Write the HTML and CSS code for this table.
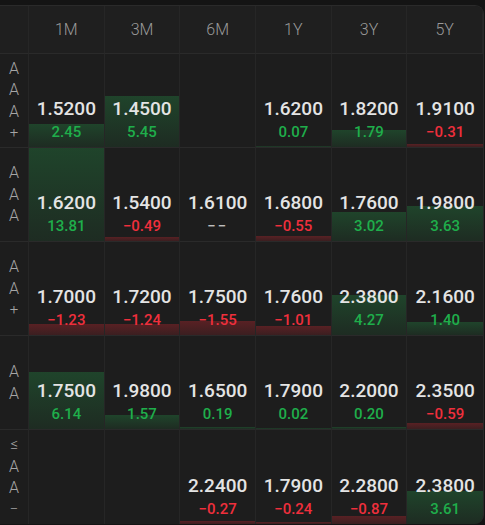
FILE: index.html
```html
<!DOCTYPE html>
<html lang="en">
<head>
    <meta charset="UTF-8">
    <meta name="viewport" content="width=device-width, initial-scale=1.0">
    <title>Rate Matrix</title>
    <link rel="stylesheet" href="styles.css">
</head>
<body>

    <div class="panel">
        <!-- Header -->
        <div class="cell head corner"></div>
        <div class="cell head">1M</div>
        <div class="cell head">3M</div>
        <div class="cell head">6M</div>
        <div class="cell head">1Y</div>
        <div class="cell head">3Y</div>
        <div class="cell head">5Y</div>

        <!-- Row 1 -->
        <div class="cell label"><span>A</span><span>A</span><span>A</span><span class="sign">+</span></div>
        <div class="cell"><div class="bar up" style="height:23px"></div><div class="val">1.5200</div><div class="chg up">2.45</div></div>
        <div class="cell"><div class="bar up" style="height:51px"></div><div class="val">1.4500</div><div class="chg up">5.45</div></div>
        <div class="cell"></div>
        <div class="cell"><div class="bar up" style="height:1px"></div><div class="val">1.6200</div><div class="chg up">0.07</div></div>
        <div class="cell"><div class="bar up" style="height:17px"></div><div class="val">1.8200</div><div class="chg up">1.79</div></div>
        <div class="cell last"><div class="bar down" style="height:3px"></div><div class="val">1.9100</div><div class="chg down">&minus;0.31</div></div>

        <!-- Row 2 -->
        <div class="cell label"><span>A</span><span>A</span><span>A</span></div>
        <div class="cell"><div class="bar up" style="height:100%"></div><div class="val">1.6200</div><div class="chg up">13.81</div></div>
        <div class="cell"><div class="bar down" style="height:4px"></div><div class="val">1.5400</div><div class="chg down">&minus;0.49</div></div>
        <div class="cell"><div class="val">1.6100</div><div class="chg flat">&minus;&minus;</div></div>
        <div class="cell"><div class="bar down" style="height:5px"></div><div class="val">1.6800</div><div class="chg down">&minus;0.55</div></div>
        <div class="cell"><div class="bar up" style="height:29px"></div><div class="val">1.7600</div><div class="chg up">3.02</div></div>
        <div class="cell last"><div class="bar up" style="height:35px"></div><div class="val">1.9800</div><div class="chg up">3.63</div></div>

        <!-- Row 3 -->
        <div class="cell label"><span>A</span><span>A</span><span class="sign">+</span></div>
        <div class="cell"><div class="bar down" style="height:11px"></div><div class="val">1.7000</div><div class="chg down">&minus;1.23</div></div>
        <div class="cell"><div class="bar down" style="height:11px"></div><div class="val">1.7200</div><div class="chg down">&minus;1.24</div></div>
        <div class="cell"><div class="bar down" style="height:14px"></div><div class="val">1.7500</div><div class="chg down">&minus;1.55</div></div>
        <div class="cell"><div class="bar down" style="height:9px"></div><div class="val">1.7600</div><div class="chg down">&minus;1.01</div></div>
        <div class="cell"><div class="bar up" style="height:40px"></div><div class="val">2.3800</div><div class="chg up">4.27</div></div>
        <div class="cell last"><div class="bar up" style="height:13px"></div><div class="val">2.1600</div><div class="chg up">1.40</div></div>

        <!-- Row 4 -->
        <div class="cell label"><span>A</span><span>A</span></div>
        <div class="cell"><div class="bar up" style="height:57px"></div><div class="val">1.7500</div><div class="chg up">6.14</div></div>
        <div class="cell"><div class="bar up" style="height:14px"></div><div class="val">1.9800</div><div class="chg up">1.57</div></div>
        <div class="cell"><div class="bar up" style="height:2px"></div><div class="val">1.6500</div><div class="chg up">0.19</div></div>
        <div class="cell"><div class="bar up" style="height:1px"></div><div class="val">1.7900</div><div class="chg up">0.02</div></div>
        <div class="cell"><div class="bar up" style="height:2px"></div><div class="val">2.2000</div><div class="chg up">0.20</div></div>
        <div class="cell last"><div class="bar down" style="height:6px"></div><div class="val">2.3500</div><div class="chg down">&minus;0.59</div></div>

        <!-- Row 5 -->
        <div class="cell label bottom"><span class="sign">&le;</span><span>A</span><span>A</span><span class="sign">&minus;</span></div>
        <div class="cell bottom"></div>
        <div class="cell bottom"></div>
        <div class="cell bottom"><div class="bar down" style="height:3px"></div><div class="val">2.2400</div><div class="chg down">&minus;0.27</div></div>
        <div class="cell bottom"><div class="bar down" style="height:2px"></div><div class="val">1.7900</div><div class="chg down">&minus;0.24</div></div>
        <div class="cell bottom"><div class="bar down" style="height:8px"></div><div class="val">2.2800</div><div class="chg down">&minus;0.87</div></div>
        <div class="cell bottom last"><div class="bar up" style="height:33px"></div><div class="val">2.3800</div><div class="chg up">3.61</div></div>
    </div>

</body>
</html>
```

FILE: styles.css
```css
/* General Styling */
body {
    margin: 0;
    background: #141414;
    font-family: Roboto, "Noto Sans", sans-serif;
    color: #e2e2e2;
}

/* Matrix Panel */
.panel {
    margin-top: 5px;
    width: 484px;
    height: 519px;
    display: grid;
    grid-template-columns: 29px repeat(6, 1fr);
    grid-template-rows: 48px repeat(5, 1fr);
    background: #1d1d1d;
    border-top: 1px solid #2a2a2a;
    border-right: 1px solid #2a2a2a;
    border-radius: 0 9px 9px 0;
    overflow: hidden;
    box-sizing: border-box;
}

/* Cells */
.cell {
    position: relative;
    display: flex;
    flex-direction: column;
    align-items: center;
    justify-content: flex-end;
    padding-bottom: 5px;
    border-right: 1px solid #262626;
    border-bottom: 1px solid #2a2a2a;
    box-sizing: border-box;
}
.cell.last {
    border-right: none;
}
.cell.bottom {
    border-bottom: none;
}

/* Header */
.head {
    justify-content: center;
    padding-bottom: 0;
    font-size: 16px;
    font-weight: 300;
    color: #999999;
    background: #1f1f1f;
}
.head:last-child {
    border-right: none;
}

/* Row labels */
.label {
    justify-content: center;
    padding-bottom: 0;
    font-size: 16px;
    font-weight: 300;
    line-height: 21.5px;
    color: #a6a6a6;
}
.label .sign {
    font-size: 15px;
}

/* Bars behind values */
.bar {
    position: absolute;
    left: 0;
    right: 0;
    bottom: 0;
}
.bar.up {
    background: linear-gradient(180deg, rgba(36, 150, 72, 0.32), rgba(36, 150, 72, 0.12));
}
.bar.down {
    background: linear-gradient(180deg, rgba(215, 40, 50, 0.32), rgba(215, 40, 50, 0.16));
}

/* Numbers */
.val {
    position: relative;
    font-size: 19px;
    font-weight: 500;
    line-height: 26px;
    color: #e4e4e4;
}
.chg {
    position: relative;
    font-size: 15px;
    font-weight: 500;
    line-height: 20px;
}
.chg.up {
    color: #1fae4b;
}
.chg.down {
    color: #ef2f3c;
}
.chg.flat {
    color: #bdbdbd;
    letter-spacing: 2px;
}
```
